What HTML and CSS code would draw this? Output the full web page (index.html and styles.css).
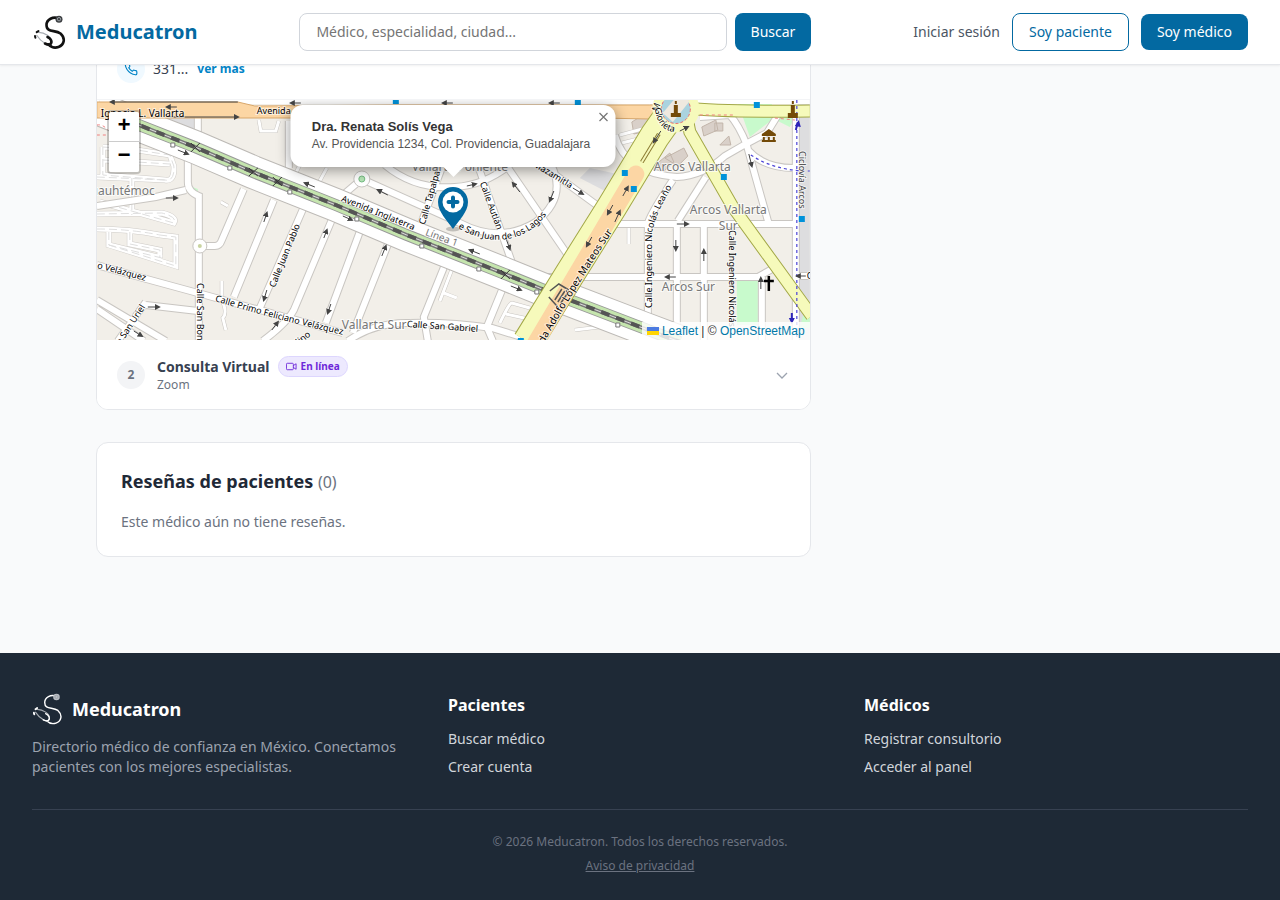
FILE: index.html
```html
<!DOCTYPE html>
<html lang="es">
<head>
<meta charset="utf-8">
<meta name="viewport" content="width=device-width, initial-scale=1">
<title>Meducatron</title>
<link rel="stylesheet" href="styles.css">
</head>
<body>
<svg class="sprite" aria-hidden="true">
  <symbol id="logo" viewBox="0 0 34 34">
    <path d="M26 3.500C20 1 13.500 4.500 13.500 10C13.500 18 22 14.500 27.500 18.500C33 23.500 31 30 25.500 32C22 33.200 18 32 15.500 29.500" fill="none" stroke="currentColor" stroke-width="var(--tube)" stroke-linecap="round"/>
    <path d="M4.500 17.500C11 17 20 22 18.500 28C17 33 8 27 3.500 20" fill="none" stroke="#a8adb3" stroke-width="1.200"/>
    <path d="M14.500 22C18 23.500 19.500 27 17.500 29C16 30.500 14 29.500 12 28.500" fill="none" stroke="currentColor" stroke-width="var(--tube)" stroke-linecap="round"/>
    <path d="M5.500 16L3.700 17.200M2 21L2.400 22.700" stroke="currentColor" stroke-width="2" stroke-linecap="round"/>
    <circle cx="26" cy="4.200" r="3.500" fill="var(--disc)"/><circle cx="26" cy="4.200" r="1.700" fill="none" stroke="#9aa0a6" stroke-width="1"/>
  </symbol>
</svg>

<header class="topbar">
  <a class="brand" href="#"><svg class="brand-icon"><use href="#logo"/></svg>Meducatron</a>
  <form class="search" role="search">
    <input class="search-input" type="text" aria-label="Buscar médico" placeholder="Médico, especialidad, ciudad...">
    <button class="btn btn-solid btn-search" type="button">Buscar</button>
  </form>
  <nav class="nav">
    <a class="nav-link" href="#">Iniciar sesión</a>
    <a class="btn btn-outline" href="#">Soy paciente</a>
    <a class="btn btn-solid" href="#">Soy médico</a>
  </nav>
</header>

<main class="page">
  <div class="column">
    <section class="card offices">
      <div class="phone-row">
        <span class="phone-icon"><svg viewBox="0 0 24 24" width="14" height="14"><path d="M22 16.920v3a2 2 0 0 1-2.180 2 19.790 19.790 0 0 1-8.630-3.070 19.500 19.500 0 0 1-6-6 19.790 19.790 0 0 1-3.070-8.670A2 2 0 0 1 4.110 2h3a2 2 0 0 1 2 1.720c.13.96.36 1.900.7 2.810a2 2 0 0 1-.45 2.110L8.090 9.910a16 16 0 0 0 6 6l1.270-1.270a2 2 0 0 1 2.110-.45c.91.34 1.850.57 2.810.7A2 2 0 0 1 22 16.920z"/></svg></span>
        <span>331...</span>
        <button class="more" type="button">ver más</button>
      </div>

      <div class="map">
        <svg class="map-canvas" viewBox="97 100 713 240" preserveAspectRatio="xMidYMid slice" role="img" aria-label="Mapa">
          <defs>
            <g id="lanes">
              <path d="M97 229Q130 229 160 235M109 232V245L162 258M109 245L176 266V237L160 235"/>
              <path d="M130 232V244L160 250V258M97 214L162 213Q178 217 174 223L100 202M132 178V215M97 177L166 180M103 147V175L165 180Q175 182 174 166L170 155L137 150M103 160L170 164M103 147L130 149"/>
            </g>
            <g id="minor">
              <path d="M221 202L228 206M222 281V300Q228 313 223 318L226 330M453 267L440 301M444 293L457 298M500 323Q510 302 512 303L530 308M506 314L529 319M629 226V244M259 120L261 131H276L279 121"/>
              <path d="M620 135L650 127M622 143L646 137M300 165L296 173M327 168L316 188M575 330L600 327"/>
            </g>
            <g id="roads">
              <path d="M198 118V142M289 121V168M188 158V182Q188 192 199 196V340M97 206L156 197L186 190M199 246H215Q220 246 222 240L244 189"/>
              <path d="M274 200L234 297M304 207L260 308M334 215L294 310Q287 323 263 341M361 229L326 323M389 242L353 333M445 265L424 317L428 341M503 288L487 327L493 341"/>
              <path d="M97 265L143 278L209 296L343 333M146 302L118 341M146 305L198 311M97 300L166 341M97 309L144 341M348 341Q375 322 410 323Q450 322 492 328L535 341"/>
              <path d="M335 202L362 179L460 223Q500 244 536 222Q567 198 552 166M385 165Q415 190 455 187Q485 185 510 165M443 165L420 227M479 168L514 268M507 166L570 258M535 160L605 211"/>
              <path d="M615 135Q625 173 677 177Q703 176 725 156Q745 144 767 133L780 112M700 117L730 115Q739 125 747 145Q753 168 769 224M748 150Q765 169 797 168M706 177L678 221M673 180Q648 218 648 224V340M616 224H797M548 277H758L776 267M677 224V340M704 224V340M762 277V340M796 116V340M798 276H810"/>
            </g>
            <path id="rail" d="M97 108L139 125L195 147L253 172L336 205L407 235L505 274L557 295L643 328L680 342"/>
            <path id="mateos" d="M672 112L655 136L612 207L570 274L528 342"/>
            <path id="vallarta" d="M686 112L690 132L733 207L812 316M686 108Q720 112 810 111"/>
            <path id="label-inglaterra" d="M341 201Q375 214 425 235"/>
            <path id="label-lagos" d="M458 228Q500 251 532 229Q547 218 556 198"/>
            <path id="label-glorieta" d="M655 108Q658 132 677 132Q690 132 694 120"/>
            <path id="label-primo" d="M215 301Q270 318 348 336"/>
            <path id="label-mateos" d="M540 351Q570 295 622 218"/>
            <path id="label-leano" d="M652 308V235Q655 211 682 172"/>
            <marker id="tip" viewBox="0 0 6 6" refX="4" refY="3" markerWidth="6" markerHeight="6" orient="auto" markerUnits="userSpaceOnUse"><path d="M0 0L6 3L0 6Z" fill="#444"/></marker>
          </defs>

          <rect class="land" x="97" y="100" width="713" height="240"/>
          <path class="paved" d="M798 100H810V340H798ZM150 118H197V142ZM580 178L590 168L622 175L607 192Z"/>
          <path class="building" d="M632 122L648 112L652 130L634 134ZM665 158L684 148L688 156L678 166ZM702 127L716 120L718 130L704 136ZM715 123H723V131H715ZM653 167L670 153L674 162L660 175ZM720 145L729 136L731 145Z"/>
          <path class="park" d="M737 100H772V120L750 137ZM772 118L795 117L790 127ZM737 278H758V325H737ZM803 316L810 312V328H800ZM190 186L198 189V196L190 194Z"/>
          <rect class="white-road" x="97" y="99" width="713" height="5"/>
          <use class="case-minor" href="#minor"/><use class="fill-minor" href="#minor"/>
          <use class="case-lanes" href="#lanes"/><use class="fill-lanes" href="#lanes"/><use class="dash-lanes" href="#lanes"/>
          <use class="case-road" href="#roads"/><use class="fill-road" href="#roads"/>
          <circle class="island" cx="200" cy="246" r="7"/><circle cx="200" cy="246" r="2" fill="#c9d4a0"/>
          <circle class="island" cx="362" cy="179" r="8"/><circle cx="362" cy="179" r="3" fill="#b5e3b5" stroke="#75bc83"/>
          <use class="rail-case" href="#rail"/><use class="rail-road" href="#rail"/><use class="rail-edge" href="#rail"/><use class="rail-green" href="#rail"/><use class="rail-gray" href="#rail"/><use class="rail-dash" href="#rail"/><use class="rail-core" href="#rail"/>

          <path class="orange-road" d="M97 102H238L255 106L400 105H650L672 104V115L650 119L600 118H97Z"/>
          <use class="mateos-case" href="#mateos"/><use class="mateos-fill" href="#mateos"/>
          <path d="M636 174L585 260L534 346" fill="none" stroke="#fcd6a4" stroke-width="17" stroke-linecap="round"/>
          <use class="vallarta-case" href="#vallarta"/><use class="vallarta-fill" href="#vallarta"/>
          <circle cx="676" cy="109" r="19" fill="none" stroke="#f6fabb" stroke-width="9"/>
          <circle cx="676" cy="109" r="14.500" fill="#aad3df" stroke="#ec6f6f" stroke-dasharray="3 2"/>
          <path d="M663 113L678 95L690 101L673 122Z" fill="#efe9df"/>
          <path d="M550 291L559 284L569 290M555 300L562 289M558 302L565 291M561 303L568 293M549 297L558 307" fill="none" stroke="#555" stroke-width="1.500"/>
          <path d="M642 162L659 134" stroke="#8a7a30" stroke-width="4"/><path d="M642 162L659 134" stroke="#f6fabb" stroke-width="2"/>
          <path d="M797 100V340M751 155Q775 171 810 171" fill="none" stroke="#4b43d6" stroke-width="1.200" stroke-dasharray="3 3"/>
          <path d="M97 125Q103 124 108 130M97 135H108M700 115H733M775 118L795 120" fill="none" stroke="#f08080" stroke-dasharray="3 3"/>

          <g class="poi">
            <path d="M674 105H678V113H681V117H671V113H674ZM675 101H677V104H675ZM791 105H795V113H798V118H788V113H791ZM792 101H794V104H792Z"/>
            <path d="M762 134L769 129L776 134V136H762ZM763 137H765V140H763ZM768 137H770V140H768ZM773 137H775V140H773ZM762 140H776V142H762Z"/>
          </g>
          <path d="M769 276V291M764 281H774" stroke="#000" stroke-width="2.500"/>
          <path class="stop" d="M393 99H399V104H393ZM575 99H581V105H575ZM754 102H760V108H754ZM622 170H628V176H622ZM631 186H637V192H631ZM721 174H727V180H721ZM799 216H805V222H799ZM518 338H524V341H518Z"/>
          <path class="crossing" d="M191 143L200 152M200 143L191 152M249 168L258 176M258 168L249 176M273 177L282 186M282 177L273 186M501 270L510 279M510 270L501 279"/>
          <path class="box" d="M171 143H175V147H171ZM228 166H232V170H228ZM288 190H292V194H288ZM355 217H359V221H355ZM420 244H424V248H420ZM477 267H481V271H477ZM535 290H539V294H535ZM616 323H620V327H616Z"/>
          <g class="arrow">
            <path d="M238 102H111"/><path d="M177 107H167"/><path d="M170 117H238"/><path d="M301 103H291"/><path d="M453 103H443"/><path d="M560 103H550"/>
            <path d="M178 150L188 154"/><path d="M315 187L305 183"/><path d="M166 198H177"/><path d="M264 222L267 213"/><path d="M324 238L327 230"/><path d="M331 304L328 313"/><path d="M267 290L264 300"/><path d="M148 307H159"/><path d="M272 330L278 322"/><path d="M134 331L142 336"/>
            <path d="M343 216L352 220"/><path d="M382 256L386 246"/><path d="M480 254L470 250"/><path d="M506 238L510 249"/><path d="M511 286L521 290"/><path d="M388 195L378 190"/><path d="M467 186L476 184"/><path d="M520 192L513 183"/><path d="M554 191L550 201"/>
            <path d="M573 188L583 194"/><path d="M623 196L628 187"/><path d="M613 205L608 214"/><path d="M615 222L620 211"/><path d="M592 237L587 246"/><path d="M661 131L654 142"/><path d="M680 131L688 127"/><path d="M749 154L752 166"/><path d="M677 224H688"/><path d="M676 240V250"/><path d="M704 261V250"/><path d="M676 277H666"/><path d="M761 289V278"/><path d="M806 276H797"/>
          </g>
          <path d="M796 130L798 122M792 313V321" fill="none" stroke="#2d25b9" stroke-width="2"/><path d="M795 126L799 120L801 127ZM789 318H795L792 324Z" fill="#2d25b9"/>

          <g class="street">
            <text class="avenue" x="101" y="117">Ignacio L. Vallarta</text><text x="257" y="114">Avenida</text>
            <text transform="translate(97 268) rotate(15)">o Velázquez</text>
            <text transform="translate(121 345) rotate(-57)">e San Uriel</text>
            <text transform="translate(197 283) rotate(90)">Calle San Bon</text>
            <text transform="translate(275 288) rotate(-68)">Calle Juan Pablo</text>
            <text transform="translate(299 345) rotate(-38)">lino</text>
            <text transform="translate(425 225) rotate(-74)">Calle Tapalpa</text>
            <text transform="translate(480 183) rotate(70)">Calle Autlán</text>
            <text transform="translate(533 166) rotate(31)">Mazamitla</text>
            <text transform="translate(407 327) rotate(4)">Calle San Gabriel</text>
            <text transform="translate(729 230) rotate(90)">Calle Ingeniero Nicolás</text>
            <text class="cycle" transform="translate(799 151) rotate(90)">Ciclovía Arcos</text>
            <text x="807" y="279">C</text>
            <text transform="translate(658 112) rotate(-70)">M</text>
            <text><textPath href="#label-inglaterra">Avenida Inglaterra</textPath></text>
            <text><textPath href="#label-lagos">e San Juan de los Lagos</textPath></text>
            <text><textPath href="#label-glorieta">Glorieta</textPath></text>
            <text><textPath href="#label-primo">Calle Primo Feliciano Velázquez</textPath></text>
            <text class="avenue"><textPath href="#label-mateos">nida Adolfo López Mateos Sur</textPath></text>
            <text><textPath href="#label-leano">Calle Ingeniero Nicolás Leaño</textPath></text>
          </g>
          <g class="district">
            <text x="155" y="195" text-anchor="end">Cuauhtémoc</text><text x="412" y="171">Vallarta Poniente</text><text x="342" y="329">Vallarta Sur</text>
            <text x="654" y="171">Arcos Vallarta</text><text x="690" y="214">Arcos Vallarta</text><text x="719" y="230">Sur</text><text x="662" y="291">Arcos Sur</text>
            <text class="line-name" transform="translate(425 235) rotate(20)">Línea 1</text>
          </g>
        </svg>

        <div class="zoom">
          <button type="button" aria-label="Acercar">+</button>
          <button type="button" aria-label="Alejar">−</button>
        </div>
        <svg class="pin" viewBox="0 0 32 46" aria-hidden="true">
          <ellipse cx="16" cy="43" rx="7" ry="2.500" fill="#000" opacity=".2"/>
          <path d="M16 43C10 34 1 26 1 16A15 15 0 0 1 31 16C31 26 22 34 16 43Z" fill="#0369a1"/>
          <circle cx="16" cy="16" r="10.500" fill="#fff"/>
          <path d="M16 11.500V20.500M11.500 16H20.500" stroke="#0369a1" stroke-width="4" stroke-linecap="round"/>
        </svg>
        <div class="popup">
          <strong>Dra. Renata Solís Vega</strong>
          <span>Av. Providencia 1234, Col. Providencia, Guadalajara</span>
          <button class="popup-close" type="button" aria-label="Cerrar"><svg width="10" height="10" viewBox="0 0 10 10"><path d="M1 1l8 8M9 1l-8 8"/></svg></button>
        </div>
        <div class="attribution"><svg width="12" height="8" viewBox="0 0 12 8" aria-hidden="true"><path fill="#4c7be1" d="M0 0h12v4H0z"/><path fill="#ffd500" d="M0 4h12v4H0z"/></svg> <a href="#">Leaflet</a> | © <a href="#">OpenStreetMap</a></div>
      </div>

      <button class="office" type="button">
        <span class="office-number">2</span>
        <span class="office-text">
          <span class="office-title">Consulta Virtual
            <span class="badge"><svg width="11" height="11" viewBox="0 0 24 24"><rect x="1" y="5" width="15" height="14" rx="2"/><path d="M16 10l6-4v12l-6-4"/></svg>En línea</span>
          </span>
          <span class="office-sub">Zoom</span>
        </span>
        <svg class="chevron" viewBox="0 0 16 16"><path d="M3 6l5 5 5-5"/></svg>
      </button>
    </section>

    <section class="card reviews">
      <h2>Reseñas de pacientes <span>(0)</span></h2>
      <p>Este médico aún no tiene reseñas.</p>
    </section>
  </div>
</main>

<footer class="footer">
  <div class="footer-grid">
    <div>
      <a class="footer-brand" href="#"><svg class="footer-icon"><use href="#logo"/></svg>Meducatron</a>
      <p class="footer-about">Directorio médico de confianza en México. Conectamos pacientes con los mejores especialistas.</p>
    </div>
    <div>
      <h3>Pacientes</h3>
      <ul><li><a href="#">Buscar médico</a></li><li><a href="#">Crear cuenta</a></li></ul>
    </div>
    <div>
      <h3>Médicos</h3>
      <ul><li><a href="#">Registrar consultorio</a></li><li><a href="#">Acceder al panel</a></li></ul>
    </div>
  </div>
  <div class="legal">
    <p>© 2026 Meducatron. Todos los derechos reservados.</p>
    <a href="#">Aviso de privacidad</a>
  </div>
</footer>
</body>
</html>
```

FILE: styles.css
```css
* { box-sizing: border-box; }
html { background: #1e2936; }
body { margin: 0; background: #f9fafb; color: #1f2937; font: 14px/20px "Noto Sans", sans-serif; }
button, input { font: inherit; }
button { cursor: pointer; }
a { color: inherit; text-decoration: none; }
h2, h3, p, ul { margin: 0; padding: 0; }
ul { list-style: none; }
.sprite { position: absolute; width: 0; height: 0; }

.topbar { position: sticky; top: 0; z-index: 10; display: flex; align-items: center; justify-content: space-between; gap: 24px; height: 65px; padding: 0 32px; background: #fff; border-bottom: 1px solid #e5e7eb; box-shadow: 0 1px 2px rgba(0, 0, 0, .06); }
.brand { --tube: 2.6; --disc: #3c3f42; display: flex; align-items: center; gap: 8px; color: #0369a1; font-size: 20px; line-height: 28px; font-weight: 700; }
.brand-icon { width: 36px; height: 36px; padding: 1px; color: #111; }
.search { display: flex; gap: 8px; flex: 0 1 512px; }
.search-input { flex: 1; min-width: 0; padding: 8px 16px; border: 1px solid #d1d5db; border-radius: 8px; background: #fff; color: #1f2937; line-height: 20px; }
.search-input::placeholder { color: #757575; }
.nav { display: flex; align-items: center; gap: 12px; white-space: nowrap; }
.nav-link { color: #4b5563; }
.btn { padding: 8px 16px; border: 0; border-radius: 8px; line-height: 20px; }
.btn-solid { background: #0369a1; color: #fff; }
.btn-outline { border: 1px solid #0369a1; color: #0369a1; }

.page { display: grid; grid-template-columns: repeat(3, 1fr); gap: 32px; max-width: 1152px; margin: -27px auto 0; padding: 0 32px 96px; }
.column { grid-column: span 2; display: flex; flex-direction: column; gap: 32px; min-width: 0; }
.card { background: #fff; border: 1px solid #e5e7eb; border-radius: 12px; overflow: hidden; }
.phone-row { display: flex; align-items: center; gap: 8px; padding: 16px 20px; border-bottom: 1px solid #f3f4f6; color: #374151; }
.phone-icon { display: grid; place-items: center; width: 28px; height: 28px; border-radius: 50%; background: #f0f9ff; }
.phone-icon svg { fill: none; stroke: #0284c7; stroke-width: 2; }
.more { padding: 0 1px; border: 0; background: none; color: #0284c7; font-size: 12px; font-weight: 700; }

.map { position: relative; height: 240px; font-family: "Liberation Sans", Arial, sans-serif; overflow: hidden; }
.map-canvas { display: block; width: 100%; height: 100%; }
.land { fill: #f2efe9; }
.paved { fill: #dddddf; }
.building { fill: #d9d0c9; stroke: #c2b5aa; }
.park { fill: #c8facc; }
.white-road { fill: #fff; }
#roads, #minor, #lanes, #rail, #mateos, #vallarta { fill: none; }
.case-road { stroke: #c9c6c2; stroke-width: 8; }
.fill-road { stroke: #fff; stroke-width: 6; }
.case-minor { stroke: #c9c6c2; stroke-width: 4; }
.fill-minor { stroke: #fff; stroke-width: 3; }
.case-lanes { stroke: #cfccc8; stroke-width: 6; }
.fill-lanes { stroke: #fff; stroke-width: 5; }
.dash-lanes { stroke: #dedede; stroke-width: 1; stroke-dasharray: 8 4; }
.island { fill: #fff; stroke: #c9c6c2; }
.rail-case { stroke: #bdbab6; stroke-width: 34; }
.rail-road { stroke: #fff; stroke-width: 32; }
.rail-edge { stroke: #999; stroke-width: 12; }
.rail-green { stroke: #c5e5ae; stroke-width: 10; }
.rail-gray { stroke: #777; stroke-width: 4; }
.rail-dash { stroke: #555; stroke-width: 4; stroke-dasharray: 9 7; }
.rail-core { stroke: #ddd; stroke-width: 1; stroke-dasharray: 7 9; stroke-dashoffset: 7; }
.orange-road { fill: #fcd6a4; stroke: #d8a76b; }
.mateos-case { stroke: #a3a847; stroke-width: 31; stroke-linejoin: round; }
.mateos-fill { stroke: #f6fabb; stroke-width: 29; stroke-linejoin: round; }
.vallarta-case { stroke: #a3a847; stroke-width: 13; }
.vallarta-fill { stroke: #f6fabb; stroke-width: 11; }
.poi { fill: #734a08; }
.stop { fill: #0092da; }
.crossing { fill: none; stroke: #333; }
.box { fill: #fff; stroke: #777; }
.arrow path { fill: none; stroke: #444; marker-end: url(#tip); }
.street { font: 9px "Noto Sans", sans-serif; fill: #000; stroke: rgba(255, 255, 255, .6); stroke-width: 2px; paint-order: stroke; }
.avenue { font-size: 10px; }
.cycle { fill: #444; }
.district { font: 12px "Noto Sans", sans-serif; fill: #777; stroke: rgba(255, 255, 255, .7); stroke-width: 2px; paint-order: stroke; }
.line-name { font-size: 10px; }

.zoom { position: absolute; top: 10px; left: 10px; border: 2px solid rgba(0, 0, 0, .2); border-radius: 4px; background-clip: padding-box; overflow: hidden; }
.zoom button { display: block; width: 30px; height: 30px; padding: 0; border: 0; background: #fff; color: #000; font: bold 22px/30px "Liberation Mono", monospace; }
.zoom button:first-child { border-bottom: 1px solid #ccc; }
.pin { position: absolute; left: 50%; top: 86px; width: 32px; height: 46px; transform: translateX(-50%); }
.popup { position: absolute; left: 50%; top: 5px; display: flex; flex-direction: column; width: 325px; padding: 13px 24px 14px 21px; border-radius: 12px; background: #fff; color: #555; box-shadow: 0 3px 14px rgba(0, 0, 0, .4); font-size: 12px; line-height: 17px; white-space: nowrap; transform: translateX(-50%); }
.popup strong { color: #333; font-size: 13px; line-height: 18px; }
.popup::after { content: ""; position: absolute; left: 50%; top: 100%; border: 10px solid transparent; border-top-color: #fff; border-bottom: 0; transform: translateX(-50%); }
.popup-close { position: absolute; top: 0; right: 0; display: grid; place-items: center; width: 24px; height: 24px; padding: 0; border: 0; background: none; }
.popup-close path { fill: none; stroke: #757575; stroke-width: 1.2; }
.attribution { position: absolute; right: 0; bottom: 0; padding: 0 5px; background: rgba(255, 255, 255, .8); color: #333; font-size: 12px; line-height: 18px; white-space: nowrap; }
.attribution a { color: #0078a8; }

.office { display: flex; align-items: center; gap: 12px; width: 100%; padding: 16px 20px; border: 0; background: #fff; text-align: left; }
.office-number { display: grid; place-items: center; width: 28px; height: 28px; border-radius: 50%; background: #f3f4f6; color: #6b7280; font-size: 12px; font-weight: 700; }
.office-text { display: flex; flex: 1; flex-direction: column; }
.office-title { display: flex; align-items: center; gap: 8px; color: #374151; font-weight: 700; }
.badge { display: flex; align-items: center; gap: 4px; padding: 2px 7px; border: 1px solid #ddd6fe; border-radius: 11px; background: #ede9fe; color: #6d28d9; font-size: 10px; line-height: 15px; }
.badge svg, .chevron { fill: none; stroke: currentColor; stroke-width: 2; }
.office-sub { color: #6b7280; font-size: 12px; line-height: 16px; }
.chevron { width: 16px; height: 16px; color: #9ca3af; stroke-width: 1.3; }

.reviews { padding: 24px; }
.reviews h2 { margin-bottom: 16px; font-size: 18px; line-height: 28px; }
.reviews h2 span { color: #6b7280; font-size: 16px; font-weight: 400; }
.reviews p { color: #6b7280; }

.footer { padding: 40px 32px 24px; background: #1e2936; color: #d1d5db; }
.footer-grid { display: grid; grid-template-columns: repeat(3, 1fr); gap: 32px; }
.footer-brand { --tube: 1.5; --disc: #b8bcc2; display: flex; align-items: center; gap: 8px; margin-bottom: 12px; color: #fff; font-size: 18px; line-height: 32px; font-weight: 700; }
.footer-icon { width: 32px; height: 32px; }
.footer-about { color: #9ca3af; }
.footer h3 { margin-bottom: 12px; color: #fff; font-size: 16px; line-height: 24px; }
.footer ul { display: grid; gap: 8px; }
.legal { display: flex; flex-direction: column; align-items: center; gap: 8px; margin-top: 32px; padding-top: 24px; border-top: 1px solid #374151; color: #6b7280; font-size: 12px; line-height: 16px; }
.legal a { text-decoration: underline; }
```
